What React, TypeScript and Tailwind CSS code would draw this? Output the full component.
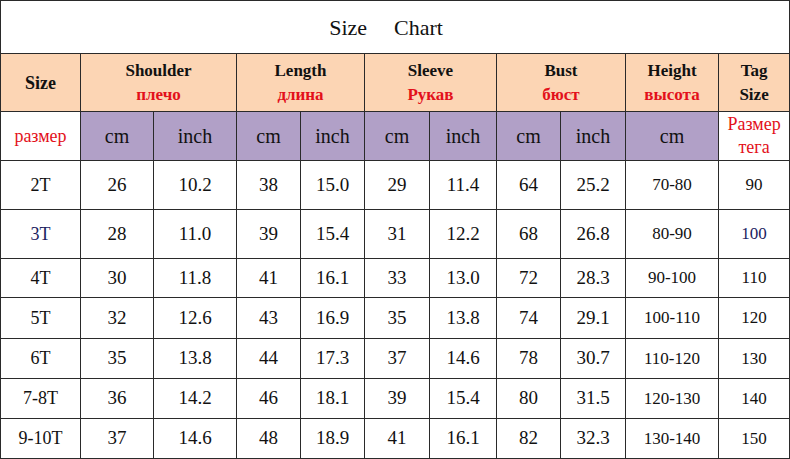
import React from 'react';

type Row = {
  size: string;
  vals: string[];
  height: string;
  tag: string;
  h: string;
  navy?: boolean;
};

const rows: Row[] = [
  { size: '2T', vals: ['26', '10.2', '38', '15.0', '29', '11.4', '64', '25.2'], height: '70-80', tag: '90', h: 'h-[49px]' },
  { size: '3T', vals: ['28', '11.0', '39', '15.4', '31', '12.2', '68', '26.8'], height: '80-90', tag: '100', h: 'h-[49px]', navy: true },
  { size: '4T', vals: ['30', '11.8', '41', '16.1', '33', '13.0', '72', '28.3'], height: '90-100', tag: '110', h: 'h-[39px]' },
  { size: '5T', vals: ['32', '12.6', '43', '16.9', '35', '13.8', '74', '29.1'], height: '100-110', tag: '120', h: 'h-[41px]' },
  { size: '6T', vals: ['35', '13.8', '44', '17.3', '37', '14.6', '78', '30.7'], height: '110-120', tag: '130', h: 'h-[40px]' },
  { size: '7-8T', vals: ['36', '14.2', '46', '18.1', '39', '15.4', '80', '31.5'], height: '120-130', tag: '140', h: 'h-[40px]' },
  { size: '9-10T', vals: ['37', '14.6', '48', '18.9', '41', '16.1', '82', '32.3'], height: '130-140', tag: '150', h: 'h-[40px]' },
];

const groups = [
  { en: 'Shoulder', ru: 'плечо' },
  { en: 'Length', ru: 'длина' },
  { en: 'Sleeve', ru: 'Рукав' },
  { en: 'Bust', ru: 'бюст' },
];

const widths = ['w-[80px]', 'w-[73px]', 'w-[83px]', 'w-[64px]', 'w-[64px]', 'w-[65px]', 'w-[67px]', 'w-[64px]', 'w-[65px]', 'w-[93px]', 'w-[71px]'];

const cell = 'border border-[#2a2a2a] text-center align-middle p-0';

export default function App() {
  return (
    <div className="w-[790px] h-[459px] bg-white font-['Liberation_Serif','Times_New_Roman',serif] text-[#111]">
      <table className="border-collapse table-fixed w-[790px]">
        <colgroup>
          {widths.map((w, i) => (
            <col key={i} className={w} />
          ))}
        </colgroup>
        <tbody>
          <tr className="h-[53px]">
            <td colSpan={11} className={`${cell} text-[22px]`}>
              <span className="pr-[18px]">
                <span>Size</span>
                <span className="inline-block w-[27px]" />
                <span>Chart</span>
              </span>
            </td>
          </tr>
          <tr className="h-[58px] bg-[#fcd5b4] font-bold text-[17px] leading-[24px]">
            <td className={`${cell} text-[18px]`}>Size</td>
            {groups.map((g) => (
              <td key={g.en} colSpan={2} className={cell}>
                <div>{g.en}</div>
                <div className="text-[#e3101a]">{g.ru}</div>
              </td>
            ))}
            <td className={cell}>
              <div>Height</div>
              <div className="text-[#e3101a]">высота</div>
            </td>
            <td className={cell}>
              <div>Tag</div>
              <div>Size</div>
            </td>
          </tr>
          <tr className="h-[49px] text-[20px]">
            <td className={`${cell} text-[18px] text-[#e3101a]`}>размер</td>
            {Array.from({ length: 4 }).flatMap((_, i) => [
              <td key={`c${i}`} className={`${cell} bg-[#b1a0c7]`}>cm</td>,
              <td key={`i${i}`} className={`${cell} bg-[#b1a0c7]`}>inch</td>,
            ])}
            <td className={`${cell} bg-[#b1a0c7]`}>cm</td>
            <td className={`${cell} text-[18px] leading-[23px] text-[#e3101a]`}>
              <div>Размер</div>
              <div>тега</div>
            </td>
          </tr>
          {rows.map((r) => (
            <tr key={r.size} className={`${r.h} text-[19px]`}>
              <td className={`${cell} text-[18px] ${r.navy ? 'text-[#1c2260]' : ''}`}>{r.size}</td>
              {r.vals.map((v, i) => (
                <td key={i} className={cell}>
                  {v}
                </td>
              ))}
              <td className={`${cell} text-[17px]`}>{r.height}</td>
              <td className={`${cell} text-[17px] ${r.navy ? 'text-[#1c2260]' : ''}`}>{r.tag}</td>
            </tr>
          ))}
        </tbody>
      </table>
    </div>
  );
}
